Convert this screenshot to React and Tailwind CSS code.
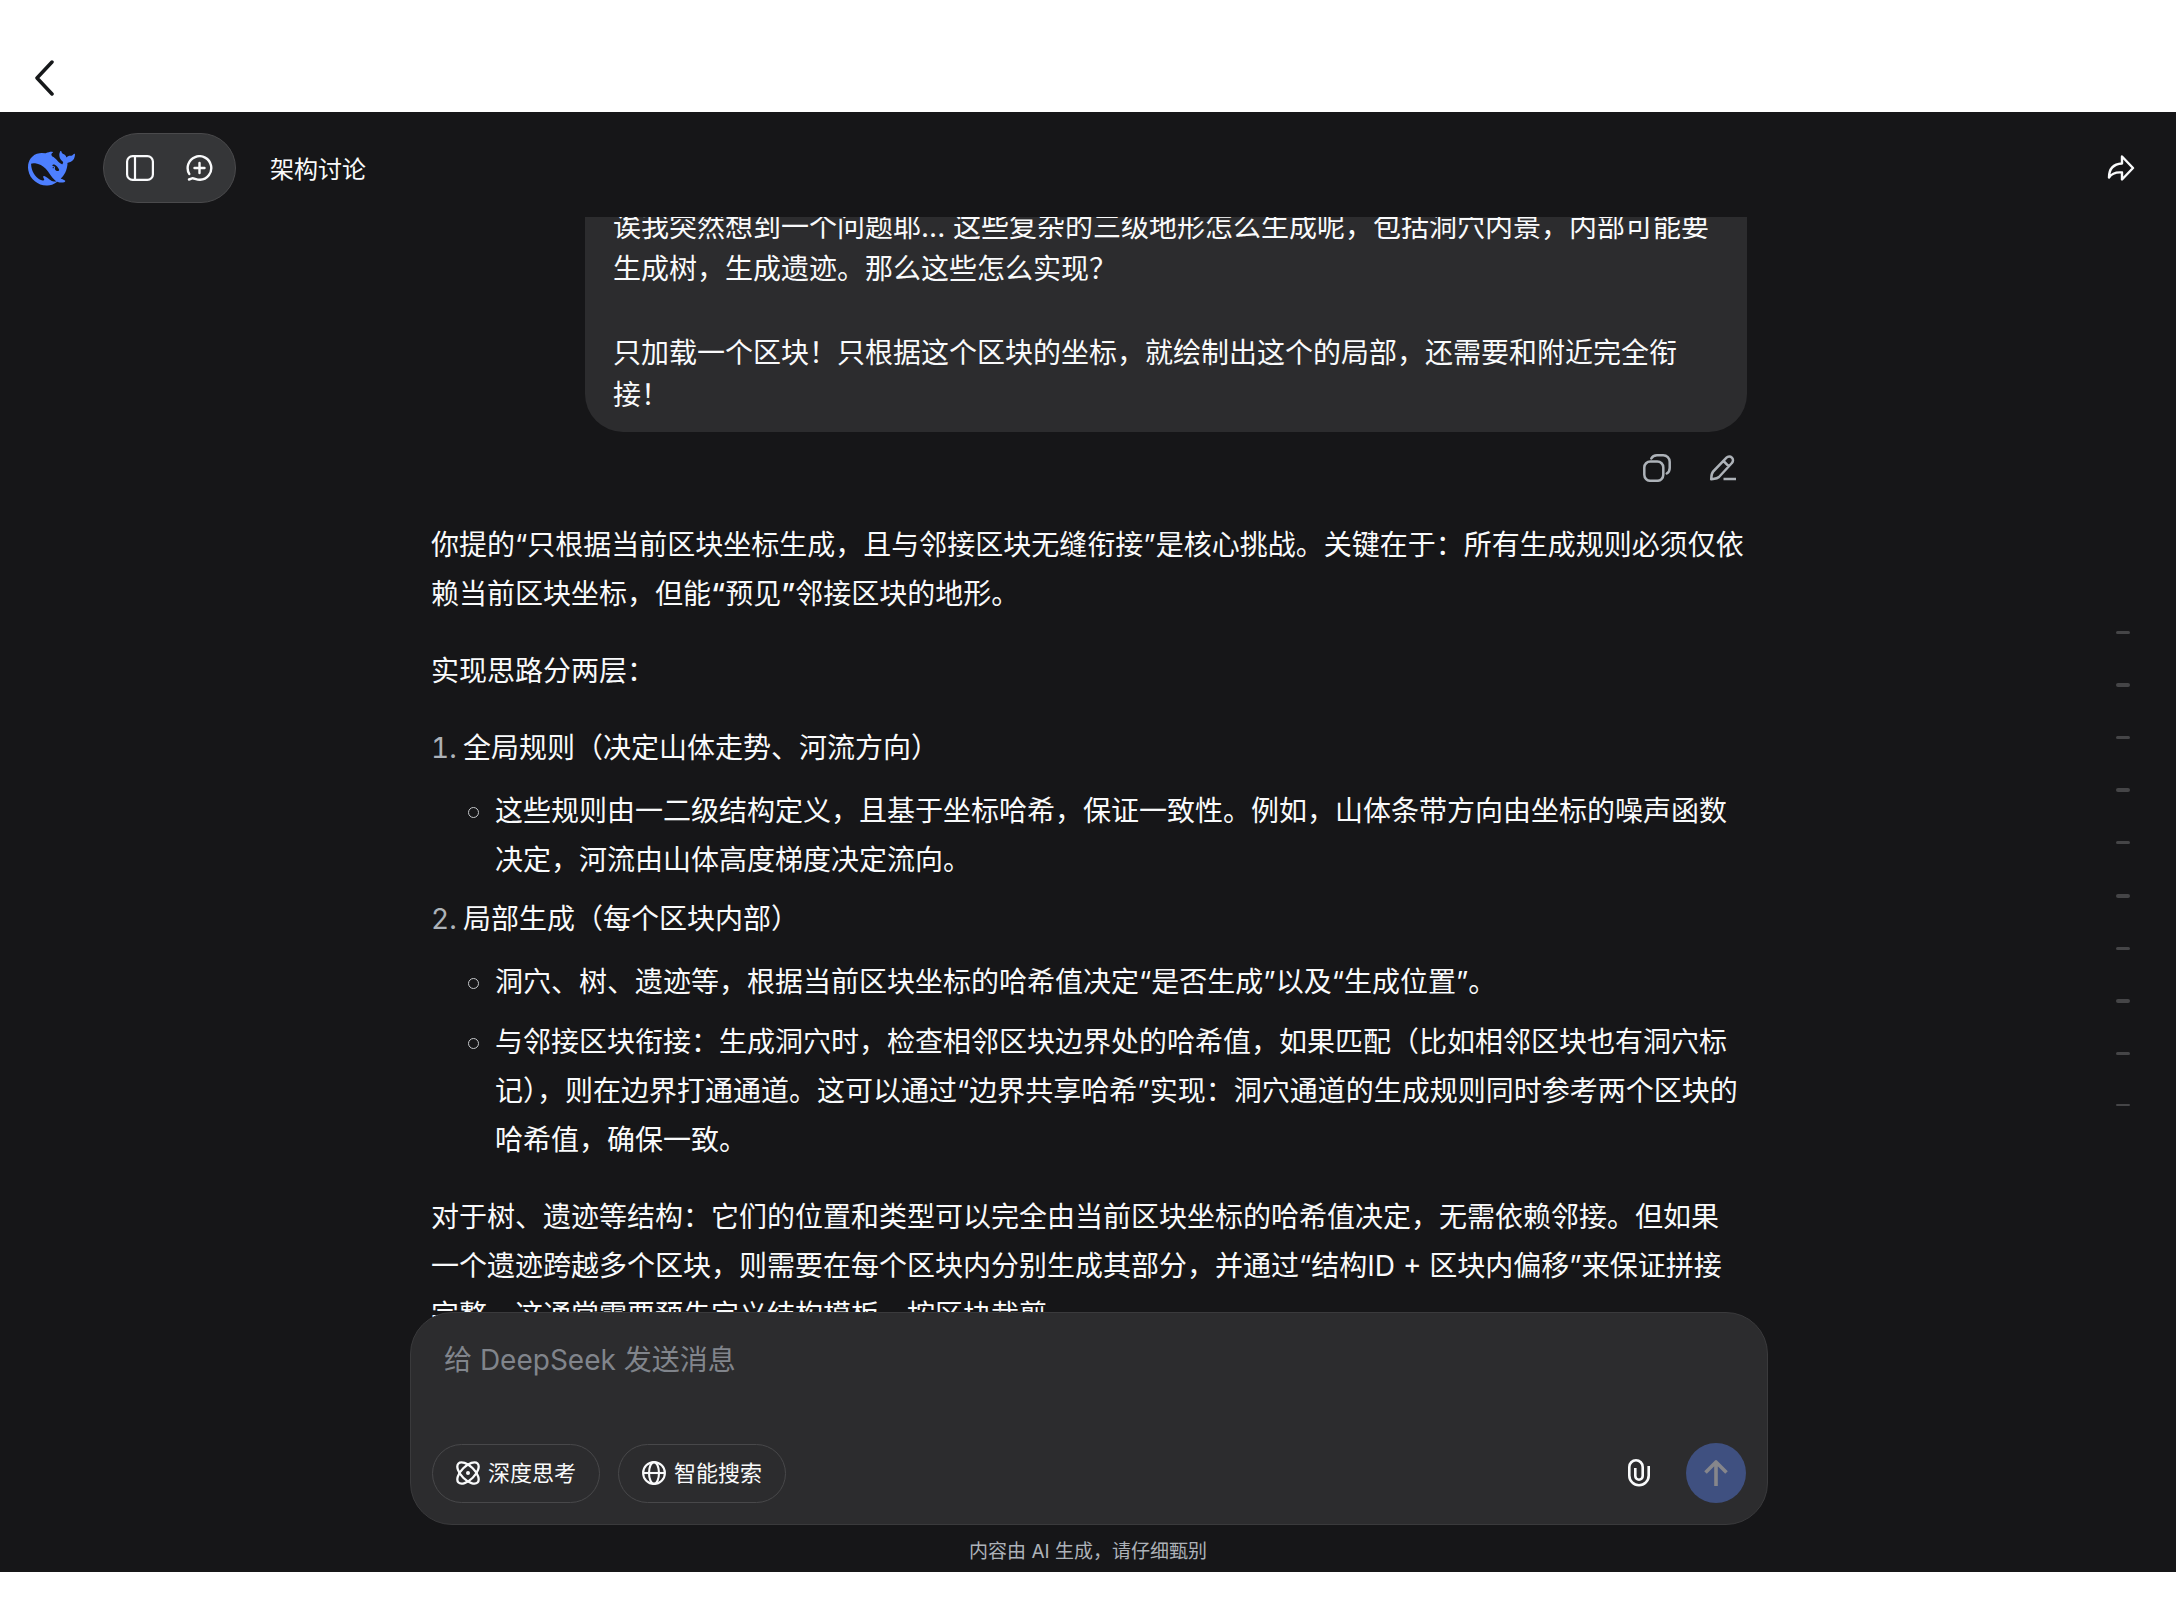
const MARKS = [3, 4, 3, 4, 3, 4, 3, 4, 3, 2];

const BackIcon = () => (
  <svg width="20" height="36" viewBox="0 0 20 36" fill="none" stroke="#16181a" strokeWidth="3.5" strokeLinecap="round" strokeLinejoin="round">
    <path d="M17 2 2 18l15 16" />
  </svg>
);

const WhaleLogo = () => (
  <svg width="47" height="35" viewBox="0 3.3 24 17.4" fill="#4d7fff">
    <path d="M23.748 4.482c-.254-.124-.364.113-.512.234-.051.039-.094.09-.137.136-.372.397-.806.657-1.373.626-.829-.046-1.537.214-2.163.848-.133-.782-.575-1.248-1.247-1.548-.352-.156-.708-.311-.955-.65-.172-.241-.219-.51-.305-.774-.055-.16-.11-.323-.293-.35-.2-.031-.278.136-.356.276-.313.572-.434 1.202-.422 1.84.027 1.436.633 2.58 1.838 3.393.137.093.172.187.129.323-.082.28-.18.552-.266.833-.055.179-.137.217-.329.14a5.526 5.526 0 01-1.736-1.18c-.857-.828-1.631-1.742-2.597-2.458a11.365 11.365 0 00-.689-.471c-.985-.957.13-1.743.388-1.836.27-.098.093-.432-.779-.428-.872.004-1.67.295-2.687.684a3.055 3.055 0 01-.465.137 9.597 9.597 0 00-2.883-.102c-1.885.21-3.39 1.102-4.497 2.623C.082 8.606-.231 10.684.152 12.85c.403 2.284 1.569 4.175 3.36 5.653 1.858 1.533 3.997 2.284 6.438 2.14 1.482-.085 3.133-.284 4.994-1.86.47.234.962.327 1.78.397.63.059 1.236-.03 1.705-.128.735-.156.684-.837.419-.961-2.155-1.004-1.682-.595-2.113-.926 1.096-1.296 2.746-2.642 3.392-7.003.05-.347.007-.565 0-.845-.004-.17.035-.237.23-.256a4.173 4.173 0 001.545-.475c1.396-.763 1.96-2.015 2.093-3.517.02-.23-.004-.467-.247-.588zM11.581 18c-2.089-1.642-3.102-2.183-3.52-2.16-.392.024-.321.471-.235.763.09.288.207.486.371.739.114.167.192.416-.113.603-.673.416-1.842-.14-1.897-.167-1.361-.802-2.5-1.86-3.301-3.307-.774-1.393-1.224-2.887-1.298-4.482-.02-.386.093-.522.477-.592a4.696 4.696 0 011.529-.039c2.132.312 3.946 1.265 5.468 2.774.868.86 1.525 1.887 2.202 2.891.72 1.066 1.494 2.082 2.48 2.914.348.292.625.514.891.677-.802.09-2.14.11-3.054-.614zm1-6.44a.306.306 0 01.415-.287.302.302 0 01.2.288.306.306 0 01-.31.307.303.303 0 01-.304-.308zm3.11 1.596c-.2.081-.399.151-.59.16a1.245 1.245 0 01-.798-.254c-.274-.23-.47-.358-.552-.758a1.73 1.73 0 01.016-.588c.07-.327-.008-.537-.239-.727-.187-.156-.426-.199-.688-.199a.559.559 0 01-.254-.078c-.11-.054-.2-.191-.114-.358.028-.054.16-.186.192-.21.356-.202.767-.136 1.146.016.352.144.618.408 1.001.782.391.451.462.576.685.914.176.265.336.537.445.848.067.195-.019.354-.25.452z" />
  </svg>
);

const SidebarIcon = () => (
  <svg width="28" height="26" viewBox="0 0 28 26" fill="none" stroke="currentColor" strokeWidth="2.2">
    <rect x="1.1" y="1.1" width="25.8" height="23.8" rx="5.5" />
    <path d="M9 1v24" />
  </svg>
);

const NewChatIcon = () => (
  <svg width="27" height="26" viewBox="0 0 27 26" fill="none" stroke="currentColor" strokeWidth="2.4" strokeLinecap="round" strokeLinejoin="round">
    <path d="M3.300 19A11.800 11.800 0 1 1 14 24.800C10 24.800 8 22.800 6 23.300c-1 .3-2 1-3 1.200" />
    <path d="M13.500 8v10M8.500 13h10" />
  </svg>
);

const ShareIcon = () => (
  <svg width="28" height="26" viewBox="0 0 28 26" fill="none" stroke="currentColor" strokeWidth="2.4" strokeLinejoin="round">
    <path d="M15 1.500 26 13 15 24.500V17.500C9 17 5 18 2 22.500 2 14 6.500 9 15 8.500Z" />
  </svg>
);

const CopyIcon = () => (
  <svg width="28" height="28" viewBox="0 0 28 28" fill="none" stroke="currentColor" strokeWidth="2.5" strokeLinecap="round">
    <rect x="1.300" y="7.500" width="19" height="19.300" rx="6" />
    <path d="M8.300 4.500C9.300 2.500 11.500 1.300 14 1.300h6.200A6.500 6.500 0 0 1 26.700 7.800V14c0 2.500-1.200 4.500-3 5.500" />
  </svg>
);

const EditIcon = () => (
  <svg width="28" height="28" viewBox="0 0 28 28" fill="none" stroke="currentColor" strokeWidth="2.500" strokeLinejoin="round">
    <path d="M17.500 3.700a3.700 3.700 0 0 1 5.400 5.300L10 23c-2 2-5 1.800-7.800 2.200C2.500 22.500 2.200 19.500 4.200 17.500ZM14.500 7l5.300 5.300M14.500 25h12.500" />
  </svg>
);

const ThinkIcon = () => (
  <svg width="24" height="24" viewBox="0 0 24 24" fill="none" stroke="currentColor" strokeWidth="2.3">
    <ellipse cx="12" cy="12" rx="13.500" ry="6.700" transform="rotate(45 12 12)" />
    <ellipse cx="12" cy="12" rx="13.500" ry="6.700" transform="rotate(-45 12 12)" />
    <circle cx="12" cy="12" r="2" fill="currentColor" stroke="none" />
  </svg>
);

const GlobeIcon = () => (
  <svg width="24" height="24" viewBox="0 0 24 24" fill="none" stroke="currentColor" strokeWidth="2.1">
    <circle cx="12" cy="12" r="10.900" />
    <ellipse cx="12" cy="12" rx="5" ry="10.900" />
    <path d="M1 12h22" />
  </svg>
);

const ClipIcon = () => (
  <svg width="22" height="28" viewBox="0 0 22 28" fill="none" stroke="currentColor" strokeWidth="2.600">
    <path d="M20.700 7v9.500a9.700 9.700 0 0 1-19.400 0V8a6.700 6.700 0 0 1 13.400 0v9a3.700 3.700 0 0 1-7.400 0V9" />
  </svg>
);

const ArrowUpIcon = () => (
  <svg width="24" height="26" viewBox="0 0 24 26" fill="none" stroke="#86868b" strokeWidth="3.600" strokeLinejoin="round">
    <path d="M12 26V2M1.500 12.500 12 2l10.500 10.500" />
  </svg>
);

const Bullet = ({ children }) => (
  <li className="flex">
    <span className="mt-5 mr-4 ml-[37px] h-[11px] w-[11px] shrink-0 rounded-full border border-[#c4c6c9]" />
    <p className="flex-1">{children}</p>
  </li>
);

const App = () => {
  return (
    <div className="flex h-screen flex-col bg-white font-[Inter,'Noto_Sans_CJK_SC',sans-serif] text-[28px] text-[#f9fafb]">
      {/* Native title bar */}
      <div className="flex h-28 shrink-0 items-end px-[35px] pb-4">
        <button aria-label="返回" className="cursor-pointer">
          <BackIcon />
        </button>
      </div>

      <div className="flex min-h-0 flex-1 flex-col bg-[#161618]">
        {/* Header */}
        <header className="flex h-[105px] shrink-0 items-center pt-[7px] pr-[41px] pl-7">
          <WhaleLogo />
          <div className="ml-7 flex h-[70px] items-center gap-8 rounded-full border border-[#4a4a4c] bg-[#353638] px-[22px]">
            <button aria-label="侧边栏">
              <SidebarIcon />
            </button>
            <button aria-label="新对话">
              <NewChatIcon />
            </button>
          </div>
          <h1 className="ml-[34px] flex-1 pt-1 text-2xl">架构讨论</h1>
          <button aria-label="分享">
            <ShareIcon />
          </button>
        </header>

        {/* Messages */}
        <main className="relative min-h-0 flex-1 overflow-hidden pl-0.5">
          <div className="mx-auto flex max-w-[1316px] flex-col">
            <div className="-mt-[43px] ml-auto max-w-[1162px] rounded-[38px] bg-[#2c2c2e] px-7 pt-8 pb-4 leading-[42px]">
              <p>
                诶我突然想到一个问题耶... 这些复杂的三级地形怎么生成呢，包括洞穴内景，内部可能要生成树，生成遗迹。那么这些怎么实现？
              </p>
              <p className="mt-[42px]">
                只加载一个区块！只根据这个区块的坐标，就绘制出这个的局部，还需要和附近完全衔接！
              </p>
            </div>
            <div className="mt-[22px] mr-2.5 flex justify-end gap-[38px] text-[#adb2b8]">
              <button aria-label="复制">
                <CopyIcon />
              </button>
              <button aria-label="编辑">
                <EditIcon />
              </button>
            </div>

            <div className="mt-[39px] pr-0.5 leading-[49px]">
              <p>
                你提的“只根据当前区块坐标生成，且与邻接区块无缝衔接”是核心挑战。关键在于：所有生成规则必须仅依赖当前区块坐标，但能<strong className="font-semibold">“</strong>预见<strong className="font-semibold">”</strong>邻接区块的地形。
              </p>
              <p className="mt-7">实现思路分两层：</p>
              <ol className="mt-7">
                <li>
                  <p>
                    <span className="inline-block w-8 text-[#adb2b8] tabular-nums">1.</span>全局规则（决定山体走势、河流方向）
                  </p>
                  <ul className="mt-3.5">
                    <Bullet>
                      这些规则由一二级结构定义，且基于坐标哈希，保证一致性。例如，山体条带方向由坐标的噪声函数决定，河流由山体高度梯度决定流向。
                    </Bullet>
                  </ul>
                </li>
                <li className="mt-2.5">
                  <p>
                    <span className="inline-block w-8 text-[#adb2b8] tabular-nums">2.</span>局部生成（每个区块内部）
                  </p>
                  <ul className="mt-3.5 flex flex-col gap-[11px]">
                    <Bullet>洞穴、树、遗迹等，根据当前区块坐标的哈希值决定“是否生成”以及“生成位置”。</Bullet>
                    <Bullet>
                      与邻接区块衔接：生成洞穴时，检查相邻区块边界处的哈希值，如果匹配（比如相邻区块也有洞穴标记），则在边界打通通道。这可以通过“边界共享哈希”实现：洞穴通道的生成规则同时参考两个区块的哈希值，确保一致。
                    </Bullet>
                  </ul>
                </li>
              </ol>
              <p className="mt-7">
                对于树、遗迹等结构：它们的位置和类型可以完全由当前区块坐标的哈希值决定，无需依赖邻接。但如果一个遗迹跨越多个区块，则需要在每个区块内分别生成其部分，并通过“结构ID + 区块内偏移”来保证拼接完整。这通常需要预先定义结构模板，按区块裁剪。
              </p>
            </div>
          </div>

          {/* Conversation position marks */}
          <nav aria-label="对话目录" className="absolute top-[414px] right-[46px] flex h-[475px] flex-col justify-between">
            {MARKS.map((height, i) => (
              <a key={i} href={`#m${i}`} aria-label={`消息 ${i + 1}`} className="block w-3.5">
                <span className="block w-full rounded-sm bg-[#454547]" style={{ height }} />
              </a>
            ))}
          </nav>
        </main>

        {/* Composer */}
        <div className="relative z-10 -mt-10 shrink-0 pl-0.5">
          <div className="mx-auto max-w-[1358px] rounded-[42px] border border-[#3a3a3c] bg-[#2c2c2e] px-[21px] pt-[23px] pb-[21px]">
            <textarea
              aria-label="消息"
              placeholder="给 DeepSeek 发送消息"
              className="block h-[84px] w-full resize-none bg-transparent px-3 leading-[48px] outline-none placeholder:text-[#81858c]"
            />
            <div className="mt-[23px] flex items-center">
              <button className="flex h-[59px] items-center gap-2 rounded-full border border-[#48484a] px-[23px] text-[22px]">
                <ThinkIcon />
                深度思考
              </button>
              <button className="ml-[18px] flex h-[59px] items-center gap-2 rounded-full border border-[#48484a] px-[23px] text-[22px]">
                <GlobeIcon />
                智能搜索
              </button>
              <button aria-label="上传附件" className="ml-auto">
                <ClipIcon />
              </button>
              <button aria-label="发送" className="ml-9 flex h-[60px] w-[60px] items-center justify-center rounded-full bg-[#3f5080]">
                <ArrowUpIcon />
              </button>
            </div>
          </div>
        </div>
        <p className="flex h-[47px] shrink-0 items-center justify-center pt-2 text-[19px] text-[#adb2b8]">
          内容由 AI 生成，请仔细甄别
        </p>
      </div>

      <div className="h-7 shrink-0" />
    </div>
  );
};

export default App;
